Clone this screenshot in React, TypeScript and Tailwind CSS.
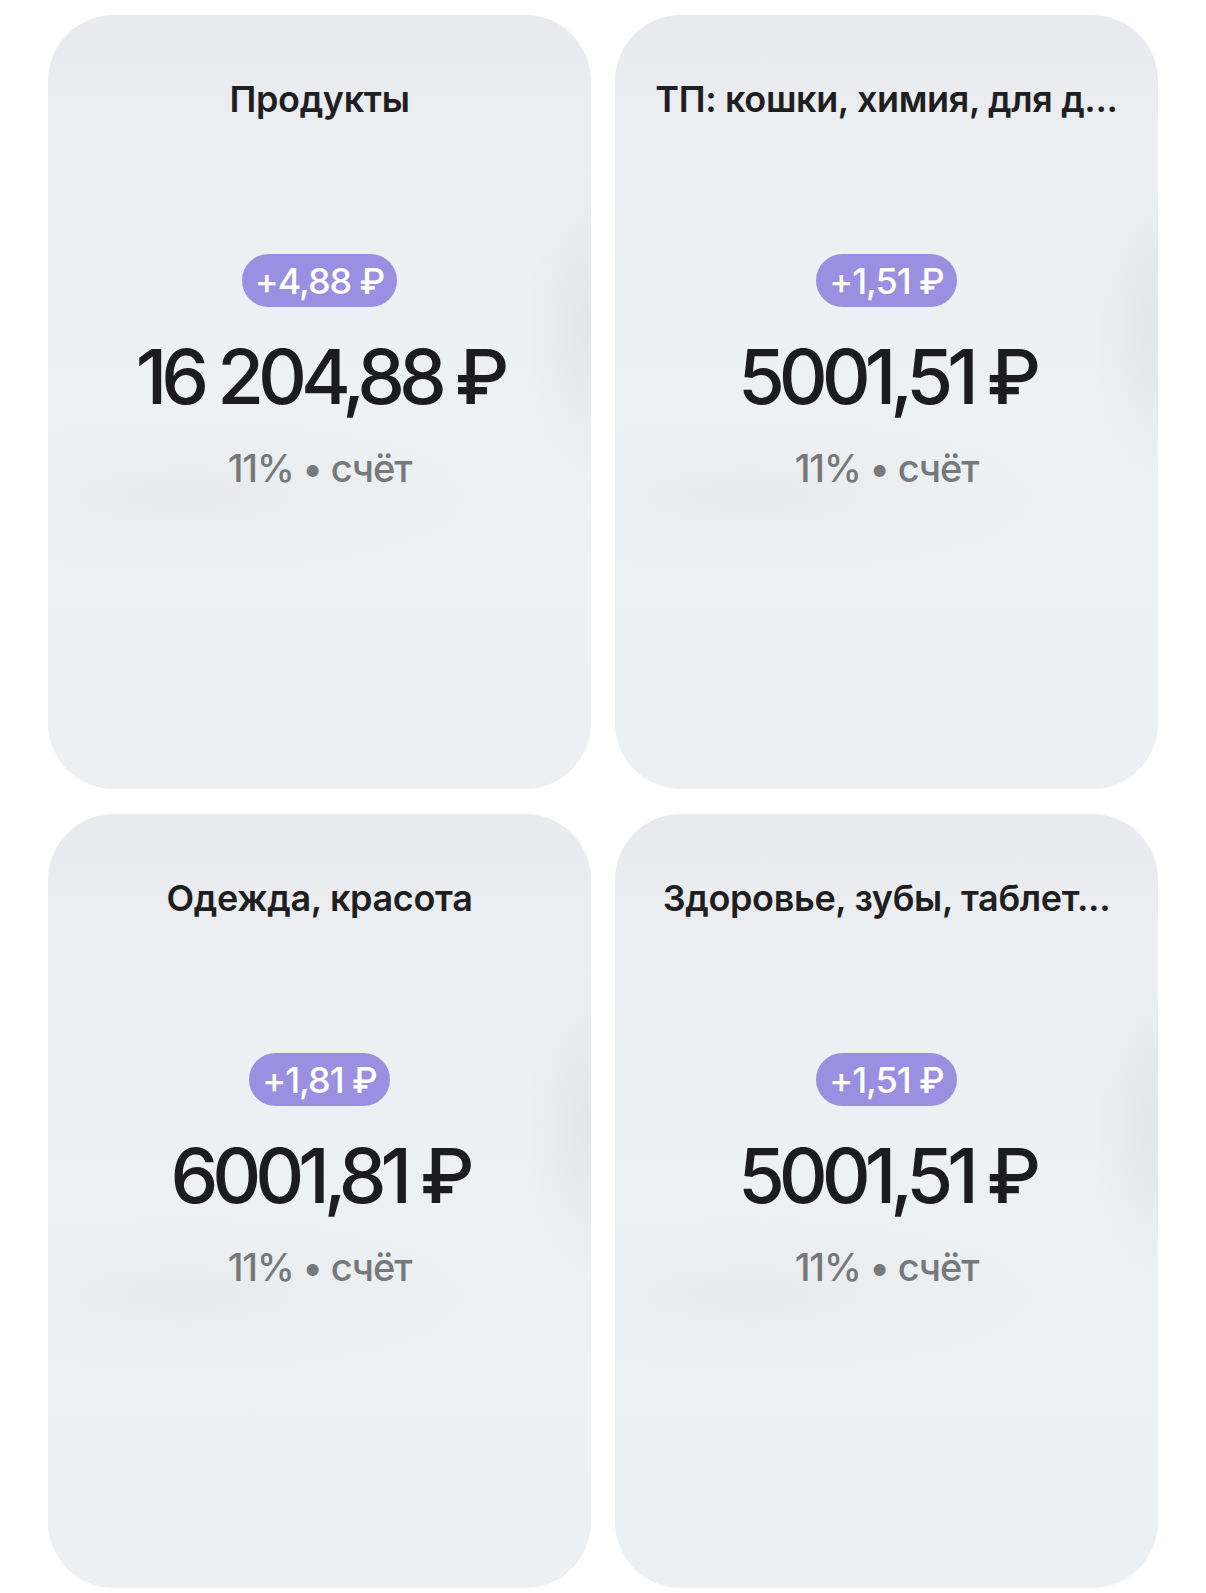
import React from 'react';

interface CardProps {
    title: string;
    bonus: string;
    amount: string;
}

const cards: CardProps[] = [
    { title: 'Продукты', bonus: '+4,88 ₽', amount: '16 204,88 ₽' },
    { title: 'ТП: кошки, химия, для д...', bonus: '+1,51 ₽', amount: '5001,51 ₽' },
    { title: 'Одежда, красота', bonus: '+1,81 ₽', amount: '6001,81 ₽' },
    { title: 'Здоровье, зубы, таблет...', bonus: '+1,51 ₽', amount: '5001,51 ₽' },
];

const Card = ({ title, bonus, amount }: CardProps) => (
    <div className="flex h-[774px] flex-col items-center rounded-[66px] bg-[radial-gradient(ellipse_12%_20%_at_100%_40%,#e2e5e9_0%,rgba(226,229,233,0)_100%),radial-gradient(ellipse_55%_10%_at_25%_62%,#e8eaed_0%,rgba(232,234,237,0)_100%),linear-gradient(180deg,#e9eaee_0%,#edeff2_25%,#eef1f3_60%,#edf0f2_100%)]">
        <div className="mt-[62px] whitespace-nowrap text-[36px] font-semibold leading-[44px] tracking-[-0.01em] text-[#1f1f21]">{title}</div>
        <div className="mt-[133px] flex h-[53px] items-center rounded-full bg-[#9a8fe0] px-[13px] text-[36px] font-medium tracking-[-0.03em] text-white">
            {bonus}
        </div>
        <div className="mt-[29px] whitespace-nowrap text-[76px] font-medium leading-[80px] tracking-[-0.08em] text-[#1c1c1e]">{amount}</div>
        <div className="mt-[30px] text-[38px] font-medium leading-[44px] tracking-[-0.03em] text-[#76787b]">
            11% • счёт
        </div>
    </div>
);

export default function App() {
    return (
        <div className="min-h-[1593px] bg-white px-[48px] pt-[15px] font-['Inter','Noto_Sans',sans-serif]">
            <div className="grid grid-cols-2 gap-x-[24px] gap-y-[25px]">
                {cards.map((card, idx) => (
                    <Card key={idx} {...card} />
                ))}
            </div>
        </div>
    );
}
